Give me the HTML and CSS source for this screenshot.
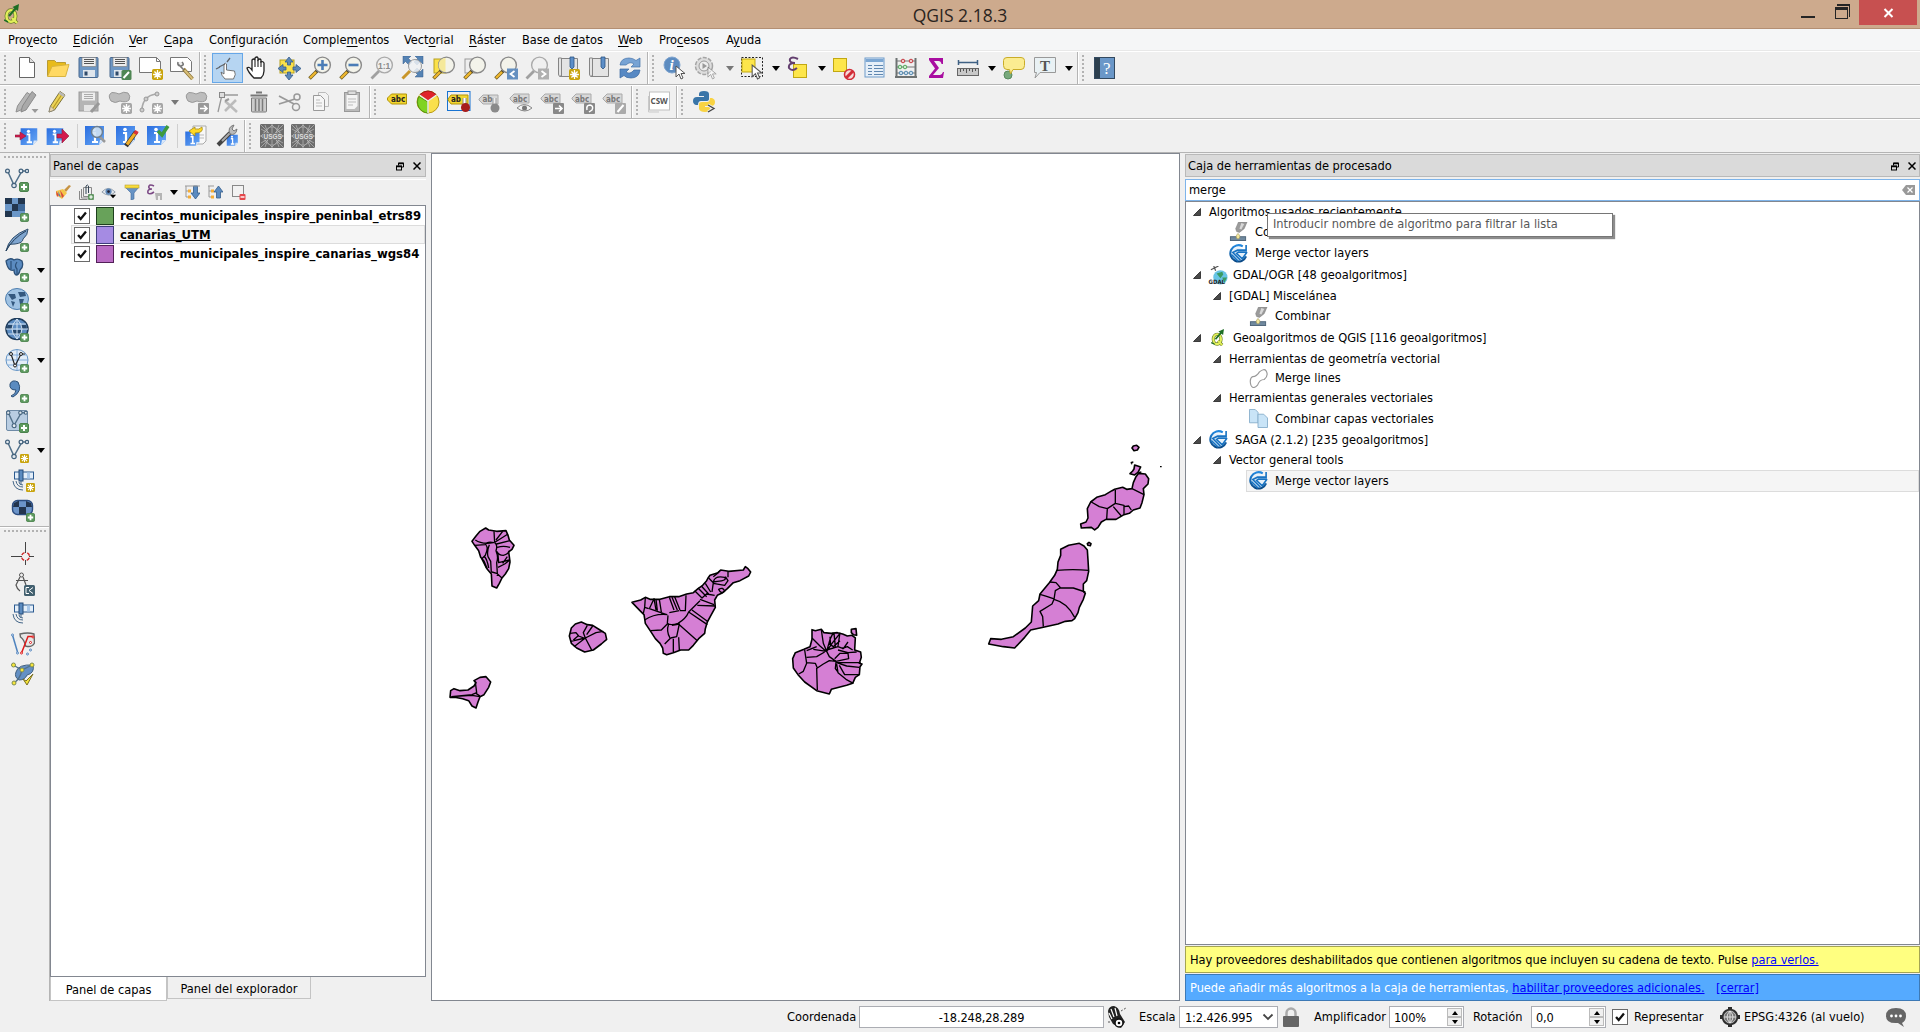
FILE: index.html
```html
<!DOCTYPE html>
<html lang="es">
<head>
<meta charset="utf-8">
<title>QGIS 2.18.3</title>
<link rel="stylesheet" href="styles.css">
</head>
<body>
<svg class="defs" width="0" height="0">
<defs>
<linearGradient id="gBlue" x1="0" y1="0" x2="1" y2="1"><stop offset="0" stop-color="#2a6ee0"/><stop offset="1" stop-color="#6aa9f5"/></linearGradient>
<linearGradient id="gSaga" x1="0" y1="0" x2="0" y2="1"><stop offset="0" stop-color="#2389df"/><stop offset="1" stop-color="#0b4a86"/></linearGradient>
</defs>
<symbol id="plus" viewBox="0 0 10 10"><rect x=".5" y=".5" width="9" height="9" rx="1.5" fill="#5d9a5f" stroke="#4b824d"/><path d="M5 2v6M2 5h6" stroke="#fff" stroke-width="2"/></symbol>
<symbol id="star" viewBox="0 0 10 10"><rect width="10" height="10" rx="1.5" fill="#c9a40d"/><path d="M5 1v8M1 5h8M2.2 2.2l5.6 5.6M7.8 2.2L2.2 7.8" stroke="#fff" stroke-width="1.2"/><circle cx="5" cy="5" r="1.6" fill="#fff"/></symbol>
<symbol id="gstar" viewBox="0 0 10 10"><rect width="10" height="10" rx="1.5" fill="#a6a6a6"/><path d="M5 1v8M1 5h8M2.2 2.2l5.6 5.6M7.8 2.2L2.2 7.8" stroke="#fff" stroke-width="1.2"/></symbol>
<symbol id="cursor" viewBox="0 0 12 15"><path d="M1 1v11l3-3 2 5 2-1-2-4.500h4z" fill="#fff" stroke="#555" stroke-width="1"/></symbol>
<symbol id="logo" viewBox="0 0 16 20"><ellipse cx="7" cy="12" rx="4.500" ry="5.800" fill="none" stroke="#65782a" stroke-width="3.800"/><path d="M8 14l5 5" stroke="#65782a" stroke-width="3.600"/><ellipse cx="7" cy="12" rx="4.500" ry="5.800" fill="none" stroke="#e2f05a" stroke-width="2.500"/><path d="M8 14l5 5" stroke="#e2f05a" stroke-width="2.400"/><path d="M5 12L12 4" stroke="#1d6e24" stroke-width="2"/><path d="M8.500 3L15 0l-1 7z" fill="#1d6e24"/><path d="M0 16l4 2" stroke="#1d6e24" stroke-width="1.500"/></symbol>
<symbol id="new" viewBox="0 0 24 24"><path d="M4.500 1.500h10l5 5v15h-15z" fill="#fff" stroke="#666"/><path d="M14.500 1.500v5h5" fill="#ddd" stroke="#666"/></symbol>
<symbol id="open" viewBox="0 0 24 24"><path d="M1.500 20V4.500h7l2 2h9V11" fill="#e8bb1b" stroke="#b99b33"/><path d="M1.500 20.500L6 10.500l17-2-3.500 12z" fill="#ffd964" stroke="#d8b440"/></symbol>
<symbol id="save" viewBox="0 0 24 24"><rect x="2" y="1.500" width="19" height="20" rx="1" fill="#6e97c4" stroke="#49698f"/><rect x="5" y="1.500" width="14" height="9" fill="#eee" stroke="#777" stroke-width=".6"/><path d="M7 3.500h10M7 5.500h10M7 7.500h10" stroke="#555" stroke-width="1"/><rect x="6" y="14" width="12" height="7" fill="#dfe5ec"/><rect x="7.500" y="15.500" width="3" height="4" fill="#304b6b"/></symbol>
<symbol id="saveas" viewBox="0 0 24 24"><use href="#save"/><rect x="13.500" y="14" width="10" height="10" rx="1.500" fill="#4e8653"/><path d="M15.500 22l5.500-6" stroke="#fff" stroke-width="2"/></symbol>
<symbol id="composer" viewBox="0 0 24 24"><path d="M.5 1.500h17l4 4v11H.5z" fill="#fff" stroke="#777"/><path d="M17.500 1.500v4h4" fill="none" stroke="#777"/><use href="#star" x="13" y="13" width="11" height="11"/></symbol>
<symbol id="manager" viewBox="0 0 24 24"><path d="M.5 1.500h17l4 4v10H.5z" fill="#fff" stroke="#777"/><path d="M13.500 13l9 10" stroke="#8e7230" stroke-width="3.500"/><path d="M14.500 14l8 9" stroke="#d7be78" stroke-width="2"/><path d="M8 8l6 6M12 6q3 3-1 4-4 0-3-4" stroke="#777" fill="#eee" stroke-width="1.600"/></symbol>
<symbol id="touch" viewBox="0 0 24 24"><path d="M8 23q-4-4-4-7l3 2V8q1.500-1.500 2.500 0v6l8 1q2 3-1 8z" transform="translate(2 0)" fill="#fff" stroke="#666" stroke-width=".9"/><path d="M4 11l6-3M12 6l3-4M1 13l4-2" stroke="#60656b" stroke-width="1.300"/></symbol>
<symbol id="hand" viewBox="0 0 24 24"><path d="M8 22q-6-6-7-10 2-2 5 2V4q2-2 3 0V2q2-2 3 0v2q2-2 3 0v2q2-1 3 1v8q0 4-3 7z" fill="#fff" stroke="#222" stroke-width="1.300"/><path d="M9 4v7M12 4v7M15 5v6" stroke="#222" stroke-width="1.100"/></symbol>
<symbol id="panselect" viewBox="0 0 24 24"><rect x="3" y="4" width="14" height="13" fill="#fbe14a" stroke="#b69f1f"/><path d="M12 1l4 5h-2.500v3h-3V6H8zM12 24l4-5h-2.500v-3h-3v3H8zM1 12.500l5-4V11h3v3H6v2.500zM24 12.500l-5-4V11h-3v3h3v2.500z" fill="#5d88b8" stroke="#355d8c" stroke-width=".8"/></symbol>
<symbol id="mag" viewBox="0 0 24 24"><path d="M9 15L1.500 22.500" stroke="#6b5a22" stroke-width="3.500"/><path d="M8 16L2 22" stroke="#f0b82e" stroke-width="2.300"/><path d="M10.500 13.500l-2 2" stroke="#333" stroke-width="3"/><circle cx="14.500" cy="9" r="7.900" fill="#f3f3ea" stroke="#8a8a8a" stroke-width="1.400"/></symbol>
<symbol id="gmag" viewBox="0 0 24 24"><path d="M9 15L1.500 22.500" stroke="#a0a0a0" stroke-width="2.800"/><circle cx="14.500" cy="9" r="7.900" fill="#f0f0f0" stroke="#aaa" stroke-width="1.400"/></symbol>
<symbol id="zin" viewBox="0 0 24 24"><use href="#mag"/><path d="M14.500 4v10M9.500 9h10" stroke="#4b7db6" stroke-width="2.600"/></symbol>
<symbol id="zout" viewBox="0 0 24 24"><use href="#mag"/><path d="M9.500 9h10" stroke="#4b7db6" stroke-width="2.600"/></symbol>
<symbol id="zfull" viewBox="0 0 24 24"><path d="M2 0h8L7.500 2.500 11 6 8 9 4.500 5.500 2 8zM22 0v8l-2.500-2.500L16 9l-3-3 3.500-3.500L14 0zM22 21h-8l2.500-2.500L13 15l3-3 3.500 3.500L22 13z" fill="#5583b4" stroke="#355d8c" stroke-width=".5"/><path d="M9 15L1.500 22.500" stroke="#c9962a" stroke-width="3"/><circle cx="14" cy="10" r="6.500" fill="#eef1f3" fill-opacity=".85" stroke="#999"/></symbol>
<symbol id="zsel" viewBox="0 0 24 24"><rect x="2" y="3" width="12" height="14" fill="#fbe14a" stroke="#b69f1f"/><use href="#mag"/><path d="M13.500 2a7 7 0 0 0 0 14z" fill="#f5e99a"/></symbol>
<symbol id="zlayer" viewBox="0 0 24 24"><rect x="2" y="3" width="12" height="14" fill="#eee" stroke="#999"/><use href="#mag"/></symbol>
<symbol id="zlast" viewBox="0 0 24 24"><use href="#mag"/><rect x="13" y="12.500" width="11" height="11" fill="#6590c0"/><path d="M20.500 15l-4 3 4 3" fill="none" stroke="#fff" stroke-width="1.800"/></symbol>
<symbol id="znext" viewBox="0 0 24 24"><use href="#gmag"/><rect x="13" y="12.500" width="11" height="11" fill="#b0b0b0"/><path d="M16.500 15l4 3-4 3" fill="none" stroke="#fff" stroke-width="1.800"/></symbol>
<symbol id="book" viewBox="0 0 24 24"><path d="M2.500 2h3v18h-2q-1 0-1-2zM5.500 2.500h16v18h-18" fill="#e4e4e4" stroke="#858585"/><path d="M14 1h4v10l-2 2-2-2z" fill="#5d8fc8" stroke="#2b5483" stroke-width=".8"/></symbol>
<symbol id="newbook" viewBox="0 0 24 24"><use href="#book"/><use href="#star" x="13" y="13" width="11" height="11"/></symbol>
<symbol id="refresh" viewBox="0 0 24 24"><path d="M2 9q1-7 9-7 4 0 7 2.500L22 2v9h-9l3-3q-4-3-8 1z" fill="#77a3d4" stroke="#4373aa" stroke-width=".7"/><path d="M22 14q-1 8-9 8-5 0-7-2.500L2 22v-9h9l-3 3q4 3 8-2z" fill="#5789c4" stroke="#3a69a0" stroke-width=".7"/></symbol>
<symbol id="disc" viewBox="0 0 24 24"><circle cx="9" cy="9" r="8" fill="#5d8cc0" stroke="#7fa4cf"/></symbol>
<symbol id="action" viewBox="0 0 24 24"><circle cx="10" cy="10" r="8.500" fill="#ddd" stroke="#a5a5a5" stroke-width="1.500" stroke-dasharray="4 1.500"/><circle cx="10" cy="10" r="5" fill="#eee" stroke="#999"/><path d="M8.500 7v6l4.500-3z" fill="#999"/><g opacity=".5"><use href="#cursor" x="13" y="10" width="11" height="14"/></g></symbol>
<symbol id="select" viewBox="0 0 24 24"><rect x="1.500" y="1.500" width="21" height="19" fill="none" stroke="#222" stroke-dasharray="2 1.500"/><rect x="2" y="3" width="13" height="13" fill="#fde64b" stroke="#c2a812"/><use href="#cursor" x="11" y="8" width="13" height="16"/></symbol>
<symbol id="expr" viewBox="0 0 24 24"><rect x="7.500" y="8.500" width="13" height="13" fill="#fde64b" stroke="#c2a812"/><path d="M12 3Q6 0 4 3q-1 4 5 4-7 0-6 5 3 4 8 0" fill="none" stroke="#623e6e" stroke-width="2"/></symbol>
<symbol id="deselect" viewBox="0 0 24 24"><rect x="1.500" y="2.500" width="13" height="13" fill="#fde64b" stroke="#c2a812"/><circle cx="17.500" cy="18.500" r="5" fill="#f7dada" stroke="#d22d38" stroke-width="1.600"/><path d="M14 22l7-7" stroke="#d22d38" stroke-width="3"/></symbol>
<symbol id="table" viewBox="0 0 24 24"><rect x="2" y="2" width="19" height="19" fill="#e6eff8" stroke="#6e9bca"/><path d="M2.500 4.500h18" stroke="#7ca7d3" stroke-width="3"/><path d="M5 9.500h4M11 9.500h9M5 12.500h4M11 12.500h9M5 15.500h4M11 15.500h9M5 18.500h4M11 18.500h9" stroke="#5f87b0" stroke-width="1.200"/></symbol>
<symbol id="abacus" viewBox="0 0 24 24"><path d="M2.500 2v20M21.500 2v20M1 21h22" stroke="#6d7272" stroke-width="2" fill="none"/><path d="M3 5h18M3 11h18M3 17h18" stroke="#777"/><g fill="#eccaca" stroke="#c63b42"><circle cx="9" cy="5" r="1.800"/><circle cx="17" cy="5" r="1.800"/></g><g fill="#cfe9cf" stroke="#55a75d"><circle cx="6" cy="11" r="1.800"/><circle cx="11" cy="11" r="1.800"/></g><g fill="#c6dcec" stroke="#5489b0"><circle cx="7" cy="17" r="1.800"/><circle cx="12" cy="17" r="1.800"/><circle cx="17" cy="17" r="1.800"/></g></symbol>
<symbol id="sigma" viewBox="0 0 24 24"><path d="M4 2h14v6h-1.500q-.5-3-3-3H9l5 7-6 7h7q2 0 3-3h1l-1 6H4v-2l6-7.500L4 4z" fill="#a80da0"/></symbol>
<symbol id="measure" viewBox="0 0 24 24"><path d="M2 6.500h20M2.500 4v5M21.500 4v5" stroke="#3f6184" stroke-width="1.500"/><rect x="1.500" y="12.500" width="21" height="7" fill="#c8c8c8" stroke="#666"/><path d="M4.500 13v3M7.500 13v2M10.500 13v4M13.500 13v2M16.500 13v3M19.500 13v2" stroke="#555"/></symbol>
<symbol id="tips" viewBox="0 0 24 24"><circle cx="6" cy="19" r="4" fill="#78a97c" stroke="#588a5e"/><path d="M5 1.500h14q3.500 0 3.500 3v5q0 4-3.500 4h-8L8.500 18l-1-4.500H5q-3.500 0-3.500-4v-5q0-3 3.500-3z" fill="#fbec91" stroke="#c9ac28"/></symbol>
<symbol id="textann" viewBox="0 0 24 24"><path d="M1.500 1.500h21v15H7L2 22l1.500-5.500h-2z" fill="#e9f1f4" stroke="#999"/></symbol>
<symbol id="help" viewBox="0 0 24 24"><rect x="1.500" y="1.500" width="20" height="21" fill="#6a97c8" stroke="#33495f"/><path d="M4.500 2v20" stroke="#2c3f4e" stroke-width="5"/></symbol>
<symbol id="pencil" viewBox="0 0 24 24"><path d="M3 22l1.500-6L14 1.500 19 5 8.500 20z" fill="#ecd358" stroke="#7a713d"/><path d="M7 18L16.500 3.500" stroke="#b79924" stroke-width="1.200"/><path d="M14 1.500L19 5l-1.500 2-5-3.500z" fill="#b9b9b9"/><path d="M3 22l1.500-6L8.500 20z" fill="#e9d5ac" stroke="#777" stroke-width=".6"/></symbol>
<symbol id="pencils" viewBox="0 0 24 24"><path d="M1 22l1.500-6L12 2.500 16 5 6 20z" fill="#b6b6b6" stroke="#909090"/><path d="M6 22l1.500-6L17 1.500 21 5 11 20z" fill="#a9a9a9" stroke="#8a8a8a"/><path d="M16.500 19h7l-3.500 4z" fill="#999"/></symbol>
<symbol id="gsave" viewBox="0 0 24 24"><rect x="2" y="2" width="19" height="19" fill="#b5b5b5" stroke="#9a9a9a"/><rect x="5" y="2.500" width="13" height="8" fill="#eee"/><path d="M7 4.500h9M7 6.500h9M7 8.500h9" stroke="#aaa"/><rect x="7" y="15" width="10" height="6" fill="#e5e5e5"/><path d="M14 22l8-9" stroke="#999" stroke-width="3"/></symbol>
<symbol id="gblob" viewBox="0 0 24 24"><path d="M4 2.500q4 0 7 1.500 5-3 9-1 3 3 1 7-3 3-9 1Q7 14 3 11-1 5 4 2.500z" fill="#bdbdbd" stroke="#999"/></symbol>
<symbol id="addfeat" viewBox="0 0 24 24"><use href="#gblob"/><use href="#gstar" x="13" y="13" width="11" height="11"/></symbol>
<symbol id="movefeat" viewBox="0 0 24 24"><use href="#gblob"/><rect x="13" y="13" width="11" height="11" rx="1" fill="#999"/><path d="M15 18.500h7M19 15.500l3 3-3 3" stroke="#fff" stroke-width="1.600" fill="none"/></symbol>
<symbol id="curve" viewBox="0 0 24 24"><path d="M3 19Q4 6 17 4" fill="none" stroke="#aaa" stroke-width="1.600"/><g fill="#ccc" stroke="#999"><circle cx="3" cy="20" r="2"/><circle cx="7" cy="9" r="2"/><circle cx="18" cy="4" r="2"/></g><use href="#gstar" x="13" y="13" width="11" height="11"/></symbol>
<symbol id="nodes" viewBox="0 0 24 24"><path d="M2 22L6 5h16" fill="none" stroke="#999" stroke-width="1.300"/><rect x="3.500" y="2.500" width="5" height="5" fill="#ddd" stroke="#888"/><path d="M9 11l12 11M20 10L9 21" stroke="#bbb" stroke-width="2.600"/><path d="M9 11l4-2" stroke="#999" stroke-width="2"/></symbol>
<symbol id="trash" viewBox="0 0 24 24"><path d="M4.500 8h15v13q0 1-1 1h-13q-1 0-1-1z" fill="#ccc" stroke="#7b7b7b"/><path d="M8.500 9v12M12 9v12M15.500 9v12" stroke="#7b7b7b" stroke-width="1.500"/><path d="M3.500 5.500h17M9 2.500h6" stroke="#777" stroke-width="2.200"/></symbol>
<symbol id="cut" viewBox="0 0 24 24"><path d="M1 6l15 8M1 14L17 9" stroke="#999" stroke-width="1.800"/><circle cx="19" cy="7" r="3" fill="none" stroke="#999" stroke-width="1.500"/><circle cx="18" cy="17" r="3.500" fill="none" stroke="#999" stroke-width="1.500"/></symbol>
<symbol id="copy" viewBox="0 0 24 24"><path d="M9.500 2.500h7l3 3v11h-10z" fill="#f3f3f3" stroke="#bbb"/><path d="M4.500 5.500h7l4 4v11h-11z" fill="#f6f6f6" stroke="#999"/><path d="M7 10h4M7 13h6M7 16h6" stroke="#bbb"/></symbol>
<symbol id="paste" viewBox="0 0 24 24"><rect x="4.500" y="2.500" width="15" height="19" fill="#bbb" stroke="#999"/><path d="M6.500 5h11v11l-3 3h-8z" fill="#f4f4f4"/><path d="M8 9h8M8 12h8M8 15h5" stroke="#bbb"/><rect x="8" y="1" width="8" height="3.500" fill="#ddd" stroke="#999"/></symbol>
<symbol id="tag" viewBox="0 0 24 24"><path d="M2.500 8l4-4h15v10h-15l-4-4z" fill="#f2d62e" stroke="#b2940a"/></symbol>
<symbol id="gtag" viewBox="0 0 24 24"><path d="M1 8l4-4h15v9H5L1 9z" fill="#d8d8d8" stroke="#aaa"/></symbol>
<symbol id="pie" viewBox="0 0 24 24"><circle cx="12" cy="12" r="11" fill="#fae04b" stroke="#b99a13"/><path d="M12 12L3 6.500A11 11 0 0 0 12 23z" fill="#7fd321" stroke="#4d9214"/><path d="M12 11L4 4.500Q12-2.500 20 4.500z" fill="#e0232a" stroke="#a3161b"/><path d="M12 11v12M12 11L3.500 5M12 11l8.500-6" stroke="#eee" stroke-width="1.500"/></symbol>
<symbol id="pinned" viewBox="0 0 24 24"><rect x=".5" y="1.500" width="22.500" height="19" fill="none" stroke="#1873d2"/><path d="M1 9l3-4h17v9H4L1 10z" fill="#f2d62e" stroke="#b2940a"/><path d="M16 8v7h3V8" fill="#fff" stroke="#888"/><circle cx="18.500" cy="17.500" r="4.500" fill="#a71c1c"/></symbol>
<symbol id="gpin" viewBox="0 0 24 24"><path d="M1 9l4-4h15v9H5L1 10z" fill="#d8d8d8" stroke="#aaa"/><path d="M15 8v8h3V8" fill="#eee" stroke="#999"/><circle cx="17" cy="18" r="4.500" fill="#8a8a8a"/></symbol>
<symbol id="geye" viewBox="0 0 24 24"><use href="#gtag"/><path d="M8 18q7-7 15 0-7 6-15 0z" fill="#f4f4f4" stroke="#888"/><circle cx="15.500" cy="18" r="2.500" fill="#777"/></symbol>
<symbol id="gmove" viewBox="0 0 24 24"><use href="#gtag"/><rect x="13" y="13" width="11" height="11" rx="1" fill="#888"/><path d="M15 18.500h7M19 15.500l3 3-3 3" stroke="#fff" stroke-width="1.600" fill="none"/></symbol>
<symbol id="grot" viewBox="0 0 24 24"><use href="#gtag"/><rect x="13" y="13" width="11" height="11" rx="1" fill="#888"/><path d="M16 20q-1-5 3-5 4 1 2 5l-3 2" stroke="#fff" stroke-width="1.500" fill="none"/></symbol>
<symbol id="gedit" viewBox="0 0 24 24"><use href="#gtag"/><rect x="13" y="13" width="11" height="11" rx="1" fill="#aaa"/><path d="M15.500 22l6-7" stroke="#fff" stroke-width="2"/></symbol>
<symbol id="csw" viewBox="0 0 24 24"><path d="M1.500 6v16H12" fill="none" stroke="#c9c9c9"/><rect x="2.500" y="2" width="20" height="18" fill="#fff" stroke="#c0c0c0"/></symbol>
<symbol id="python" viewBox="0 0 24 24"><path d="M7 4q0-3 5-3t5 3v5q0 2-3 2H9q-3 0-3 4H4q-3-1-3-4 0-4 4-4h7V6H7z" fill="#3a75a8"/><path d="M18 8h2q3 1 3 4 0 4-4 4h-6v1h5v2q0 3-5 3t-6-3v-5q0-2 3-2h5q3 0 3-4z" fill="#f9d342"/><path d="M16 15l6 3.500-6 3.500" fill="none" stroke="#eee" stroke-width="3"/><path d="M16 15l6 3.500-6 3.500" fill="none" stroke="#444" stroke-width="1.300"/></symbol>
<symbol id="pg" viewBox="0 0 24 24"><path d="M3 2h19v14l-5 5H3z" fill="url(#gBlue)"/><path d="M17 21l1-5h4z" fill="#d8e6f8"/><path d="M10 9h3v9M10 18h6" stroke="#fff" stroke-width="2.200" fill="none"/><circle cx="12" cy="5.500" r="1.800" fill="#fff"/></symbol>
<symbol id="imp" viewBox="0 0 24 24"><use href="#pg" x="3" y="2" width="21" height="22"/><path d="M0 11h5V8l6 4-6 4v-3H0z" fill="#d3194e" stroke="#8f1c3a" stroke-width=".6"/></symbol>
<symbol id="exp" viewBox="0 0 24 24"><use href="#pg" x="-2" y="2" width="21" height="22"/><path d="M11 10h5V5l7 7-7 7v-5h-5z" fill="#d3194e" stroke="#8f1c3a" stroke-width=".6"/></symbol>
<symbol id="inspect" viewBox="0 0 24 24"><use href="#pg" x="-2"/><path d="M15 12l6 6" stroke="#999" stroke-width="2.500"/><circle cx="13" cy="8" r="5.500" fill="#cfe1f2" fill-opacity=".9" stroke="#6b7f93" stroke-width="1.500"/></symbol>
<symbol id="pedit" viewBox="0 0 24 24"><use href="#pg" x="-2"/><path d="M11 22L21 8" stroke="#333" stroke-width="4.500"/><path d="M12 20.500L20 9.500" stroke="#f0ad28" stroke-width="3"/><path d="M20 10l2-3" stroke="#d9323a" stroke-width="4"/></symbol>
<symbol id="pcheck" viewBox="0 0 24 24"><use href="#pg" x="-2"/><path d="M12 7l4 4 6-9" fill="none" stroke="#3d9a3c" stroke-width="3.500"/></symbol>
<symbol id="pback" viewBox="0 0 24 24"><path d="M9 2h13v15l-3 3H9z" fill="#f8f8f8" stroke="#aaa"/><path d="M11 11h9M11 14h9" stroke="#bbb"/><use href="#pg" x="-1" y="6" width="18" height="18"/><path d="M17 1q2 6-7 6v3L4 5l6-4v2q4 1 7-2z" transform="translate(1 2)" fill="#ffd823" stroke="#a58b17" stroke-width=".8"/></symbol>
<symbol id="pwrench" viewBox="0 0 24 24"><use href="#pg" x="10" y="9" width="14" height="15"/><path d="M3 21L15 9" stroke="#444" stroke-width="4"/><path d="M7 17L16 8" stroke="#aaa" stroke-width="2"/><path d="M22 5q-1 7-7 5-3-7 4-9l-2 4 2 2z" fill="#bbb" stroke="#777"/></symbol>
<symbol id="usgs" viewBox="0 0 24 24"><rect width="24" height="24" fill="#6c6c6c"/><path d="M0 0l24 24M24 0L0 24M12 0v24M0 12h24M12 1l11 11-11 11L1 12zM5 1l3 8-7-4M19 1l-3 8 7-4M5 23l3-8-7 4M19 23l-3-8 7 4" fill="none" stroke="#bcbcbc" stroke-width=".7"/><circle cx="12" cy="12" r="9" fill="none" stroke="#a8a8a8" stroke-width=".7"/><rect x="3" y="9" width="18" height="7" fill="#7b7b7b"/></symbol>
<symbol id="vec" viewBox="0 0 24 24"><path d="M3 4l6 13L17 3h4" fill="none" stroke="#51708a" stroke-width="1.500"/><g fill="#e3eaf0" stroke="#42617c" stroke-width="1.200"><circle cx="2.500" cy="3" r="1.900"/><circle cx="9" cy="17.500" r="2.200"/><circle cx="16" cy="3" r="1.900"/><circle cx="22" cy="3" r="1.700"/></g></symbol>
<symbol id="vplus" viewBox="0 0 24 24"><use href="#vec"/><use href="#plus" x="14" y="14" width="10" height="10"/></symbol>
<symbol id="vstar" viewBox="0 0 24 24"><use href="#vec"/><use href="#star" x="15" y="15" width="9" height="9"/></symbol>
<symbol id="raster" viewBox="0 0 24 24"><rect y="0" width="20" height="19" fill="#6b97c8"/><path d="M0 0h7v6H0zM13 0h7v6h-7zM7 6h6v7H7zM0 13h7v6H0z" fill="#22364e"/><path d="M13 6h7v7h-7z" fill="#3e6898"/><use href="#plus" x="15" y="15" width="9" height="9"/></symbol>
<symbol id="feather" viewBox="0 0 24 24"><path d="M1 23Q4 8 23 1q0 6-5 10 0 4-8 5-5 0-6 1z" fill="#7fa5cf" stroke="#33506e"/><path d="M1 23Q8 10 21 3" fill="none" stroke="#223d58"/><use href="#plus" x="15" y="15" width="9" height="9"/></symbol>
<symbol id="pgis" viewBox="0 0 24 24"><path d="M1 3q4-4 8-1 4-2 8 1 2 6-2 9-1 5-4 5-2-1-2-5-6 2-8-9z" fill="#5b8bc0" stroke="#2c5078" stroke-width="1.300"/><path d="M6 3v8M12 4q-3 4 0 7v6" fill="none" stroke="#2c5078" stroke-width="1.200"/><use href="#plus" x="15" y="15" width="9" height="9"/></symbol>
<symbol id="spatial" viewBox="0 0 24 24"><ellipse cx="12" cy="11" rx="11.500" ry="10.500" fill="#9fc2e3" stroke="#4e7eae"/><path d="M3 6h7l1 4-4 2zM13 4h7l1 4-6 1zM6 13l4 1-2 5zM14 11h5l-2 6-2-1z" fill="#34587f"/><use href="#plus" x="15" y="15" width="9" height="9"/></symbol>
<symbol id="wms" viewBox="0 0 24 24"><ellipse cx="12" cy="11" rx="11" ry="10.500" fill="#5b8bc0" stroke="#1f3c5b" stroke-width="1.500"/><path d="M3 7h5v4H1zM16 7h5l1 4h-6zM8 12h8v4H8z" fill="#27486c"/><path d="M1 11h22M3 6h18M3 16h18M12 1v20M12 1Q2 11 12 21M12 1q10 10 0 20" fill="none" stroke="#cfe0f2"/><use href="#plus" x="15" y="15" width="9" height="9"/></symbol>
<symbol id="wfs" viewBox="0 0 24 24"><ellipse cx="12" cy="11" rx="11" ry="10.500" fill="#e3edf7" stroke="#6796c6"/><path d="M1 11h22M3 6h18M3 16h18M12 1v20" fill="none" stroke="#6da0d6" stroke-width=".8"/><path d="M6 5l4 12 6-12h4" fill="none" stroke="#222" stroke-width="1.200"/><g fill="#eee" stroke="#222"><circle cx="6" cy="5" r="1.500"/><circle cx="10" cy="16.500" r="1.500"/><circle cx="16" cy="5" r="1.500"/></g><use href="#plus" x="15" y="15" width="9" height="9"/></symbol>
<symbol id="comma" viewBox="0 0 24 24"><path d="M6 17q5-2 5-6-7 0-6-6 2-5 8-2 5 9-5 15z" fill="#5b8bc0" stroke="#2c5078"/><use href="#plus" x="15" y="15" width="9" height="9"/></symbol>
<symbol id="vbox" viewBox="0 0 24 24"><rect x="1.500" y="1.500" width="21" height="20" rx="1.500" fill="#b9cde2" stroke="#6e8aa6"/><g transform="translate(1 1) scale(.9)"><use href="#vec"/></g><use href="#plus" x="14" y="14" width="10" height="10"/></symbol>
<symbol id="gps" viewBox="0 0 24 24"><rect x="3.500" y="3" width="19" height="7" fill="#e3eef9" stroke="#2b5a90"/><path d="M16 3.500h3v6h-3z" fill="#a9c8ea"/><rect x="8" y="1" width="4" height="11" fill="#5b8bc0" stroke="#254b78"/><path d="M10 12v3M2 12q1 9 10 9M5 12q1 6 7 6M8 13q0 3 4 3" fill="none" stroke="#456789" stroke-width="1"/></symbol>
<symbol id="gpsstar" viewBox="0 0 24 24"><use href="#gps"/><use href="#star" x="15" y="14" width="9" height="9"/></symbol>
<symbol id="virt" viewBox="0 0 24 24"><rect x="1.500" y="1.500" width="20" height="14" rx="5" fill="#6b93c8" stroke="#2c4d80" stroke-width="1.400"/><path d="M3 4l4-2h1v6H2zM15 2l5 2 1 4h-6zM8 8h7v7H8z" fill="#22344e"/><use href="#plus" x="15" y="14" width="9" height="9"/></symbol>
<symbol id="cross" viewBox="0 0 24 24"><path d="M14.500 0v11M14.500 18v5M0 14.500h11M18 14.500h5" stroke="#444" stroke-width="1"/><circle cx="14.500" cy="14.500" r="4" fill="none" stroke="#d02a2a" stroke-width="1.400" stroke-dasharray="3.500 2.800" stroke-dashoffset="-1.300"/></symbol>
<symbol id="compass" viewBox="0 0 24 24"><circle cx="10.500" cy="3" r="2" fill="none" stroke="#555"/><path d="M9 5L5 13q1 4 4 6M12 5l3 8M5 8.500h12" fill="none" stroke="#555" stroke-width="1.200"/><rect x="13" y="13" width="11" height="11" rx="1.500" fill="#42606f"/><path d="M18 15.500h-3v6h3M22 15.500l-4 3 4 3" stroke="#fff" fill="none"/></symbol>
<symbol id="topo" viewBox="0 0 24 24"><path d="M1.500 3l5 17" stroke="#4d82be" stroke-width="1.500"/><circle cx="1.500" cy="3" r="1" fill="#fff" stroke="#4d82be"/><circle cx="6.500" cy="21" r="1" fill="#fff" stroke="#4d82be"/><path d="M9 2q8-2 14 0l.5 9q-3 5-9 3-1-6-5-9z" fill="#e6e6e6" stroke="#666" stroke-width="1.400"/><path d="M10.500 21L17 4.500h5" fill="none" stroke="#e01b1b" stroke-width="1.500"/><g fill="#fff" stroke="#e01b1b"><circle cx="10.500" cy="21" r="1"/><circle cx="22" cy="5" r="1"/><circle cx="19.500" cy="10.500" r="1"/></g><g fill="#fff" stroke="#4d82be"><circle cx="19.500" cy="18" r="1"/><circle cx="16.500" cy="22" r="1"/></g></symbol>
<symbol id="geom" viewBox="0 0 24 24"><path d="M5 10q2-8 17-7 2 8-6 10-2 5-8 5-5-3-3-8z" fill="#6490c4" stroke="#41607f"/><path d="M2 3l9 5L21 3M11 8q-2 9-8 13" fill="none" stroke="#51708a" stroke-width="1.300"/><g fill="#f8e63a" stroke="#7d8c52"><circle cx="2.500" cy="3" r="2"/><circle cx="21" cy="3" r="2"/><circle cx="11" cy="8" r="2"/><circle cx="3" cy="21" r="2"/></g><path d="M12 17l3 2 7-7-6 11z" fill="#f8e63a" stroke="#7a6f20"/></symbol>
<symbol id="float" viewBox="0 0 8 8"><path d="M2.500 3V.5h5v4H5" fill="none" stroke="#000"/><path d="M2 1h6" stroke="#000" stroke-width="1.500"/><rect x=".5" y="3.500" width="5" height="4" fill="none" stroke="#000"/><path d="M0 4h6" stroke="#000" stroke-width="1.500"/></symbol>
<symbol id="x" viewBox="0 0 8 8"><path d="M.5 .5l7 7M7.500 .5l-7 7" stroke="#000" stroke-width="1.500"/></symbol>
<symbol id="brush" viewBox="0 0 16 16"><path d="M9 6l5-5 2 1-5 6z" fill="#c79343"/><path d="M1 7l7-2 4 4-5 6-6-4z" fill="#f4c64a"/><path d="M1 7l3 4-2 2zM5 6l4 6-2 2z" fill="#d9473f"/><path d="M3 7l3 6-2-1z" fill="#4a7fc0"/></symbol>
<symbol id="grp" viewBox="0 0 16 16"><path d="M5.500 3.500h8v9h-8zM3.500 5v9h8M1.500 7v8.500h8" fill="#eee" stroke="#888"/><path d="M8 10V2q1.500-2 2.500 0v7" fill="none" stroke="#345"/><use href="#plus" x="10" y="10" width="6" height="6"/></symbol>
<symbol id="eye" viewBox="0 0 18 16"><path d="M1 8q7-8 15 0-7 7-15 0z" fill="#e3e8ee" stroke="#8a97a5"/><circle cx="8.500" cy="7.500" r="3.500" fill="#5b85b5"/><circle cx="8.500" cy="7.500" r="1.500" fill="#223"/><path d="M10 11h7l-3.500 4z" fill="#000"/></symbol>
<symbol id="funnel" viewBox="0 0 16 16"><path d="M1 3h14l-5 6v6l-3 1V9z" fill="#6793c5" stroke="#41699a" stroke-width=".6"/><rect x="1" y="1" width="14" height="3" fill="#f8dc3c" stroke="#b8a030" stroke-width=".6"/></symbol>
<symbol id="ef" viewBox="0 0 16 16"><path d="M7 2Q3 0 2 2q-1 3 3 3-5 0-4 4 2 2 6-1" fill="none" stroke="#7c4a86" stroke-width="1.600"/><path d="M8 9h7v7h-2v-4h-2v4H9z" fill="#b5b5b5"/></symbol>
<symbol id="down" viewBox="0 0 16 16"><path d="M1 2h5M2 2v11h3M2 7h3" fill="none" stroke="#999"/><path d="M4 5.500h3v3H4zM4 11.500h3v3H4z" fill="#f6ad35"/><path d="M9.500 2h4v7H16l-4.500 6L7 9h2.500z" fill="#5b8bc0" stroke="#345d8c" stroke-width=".8"/><path d="M6 2h10" stroke="#999"/></symbol>
<symbol id="up" viewBox="0 0 16 16"><path d="M1 2h6M2 2v11h3M2 7h3" fill="none" stroke="#999"/><path d="M4 5.500h3v3H4zM4 11.500h3v3H4z" fill="#f6ad35"/><path d="M9.500 14h4V8H16l-4.500-6L7 8h2.500z" fill="#5b8bc0" stroke="#345d8c" stroke-width=".8"/></symbol>
<symbol id="rem" viewBox="0 0 16 16"><rect x="2.500" y="1.500" width="11" height="11" fill="#f2f2f2" stroke="#888"/><rect x="9.500" y="10" width="6" height="6" rx="1" fill="#e4474b"/><path d="M10.500 13h4" stroke="#fff" stroke-width="1.400"/></symbol>
<symbol id="tri" viewBox="0 0 8 8"><path d="M7.500 .5v7h-7z" fill="#4a4a4a" stroke="#222" stroke-width=".8"/></symbol>
<symbol id="alg" viewBox="0 0 20 20"><path d="M7 7l3-7h9l-3 7-5 4-3-1z" fill="#9b9b9b" stroke="#777" stroke-width=".5"/><path d="M13 1l3 1-3 6-2-1z" fill="#d8d8d8"/><rect x="1.500" y="15.500" width="16" height="4" fill="#70899e" stroke="#4d6478"/><path d="M9.500 12q4 4 0 6-4-2 0-6z" fill="#f3e69b" stroke="#998f50" stroke-width=".6"/></symbol>
<symbol id="saga" viewBox="0 0 20 20"><circle cx="9.500" cy="10.500" r="7" fill="#e4f0fa"/><path d="M14.500 2.500A8.600 8.600 0 1 0 18 13" fill="none" stroke="url(#gSaga)" stroke-width="2.200"/><path d="M18 1v5.500H9L4 9l8 8M2.500 11l7 7M19 8.500h-9l-2 1.500 6 5.500 5-7" fill="none" stroke="#1873c2" stroke-width="1.700"/></symbol>
<symbol id="gdal" viewBox="0 0 20 20"><circle cx="12" cy="12" r="7.500" fill="#68c4e6"/><path d="M8 8l6-2 1 3-3 4zM14 12l5 0-3 6z" fill="#3a9b62"/><path d="M2 4l8-4M5 0l2 5" stroke="#555" stroke-width="1.300"/></symbol>
<symbol id="blob" viewBox="0 0 20 20"><path d="M4 8q4 0 7-5 5-4 7-1 3 5-2 9-5 0-7 6-5 5-7 0-2-7 2-9z" fill="#fff" stroke="#999" stroke-width="1.200"/></symbol>
<symbol id="docs" viewBox="0 0 20 20"><path d="M.5 .5h6l3 3v11h-9z" fill="#c9e4f7" stroke="#8bb1cd"/><path d="M9.500 5.500h6l4 4v10h-10z" fill="#c9e4f7" stroke="#8bb1cd"/></symbol>
</svg>

<header class="titlebar">
  <svg class="app-logo"><use href="#logo"/></svg>
  <h1>QGIS 2.18.3</h1>
  <div class="winbtns"><span class="min"></span><svg class="restore" viewBox="0 0 15 15"><path d="M2 0h13v13h-1V2H2z" fill="#252525"/><path d="M0 3h13v12H0zM1 6v8h11V6z" fill="#252525" fill-rule="evenodd"/></svg><span class="close"><svg viewBox="0 0 8 8"><path d="M0 0l8 8M8 0L0 8" stroke="#fff" stroke-width="2"/></svg></span></div>
</header>
<nav class="menu"><span>Pro<u>y</u>ecto</span><span><u>E</u>dición</span><span><u>V</u>er</span><span><u>C</u>apa</span><span>Con<u>f</u>iguración</span><span>Comple<u>m</u>entos</span><span>Vect<u>o</u>rial</span><span><u>R</u>áster</span><span>Base de <u>d</u>atos</span><span><u>W</u>eb</span><span>Pro<u>c</u>esos</span><span>A<u>y</u>uda</span></nav>

<div class="toolrow">
  <div class="bar"><i class="grip"></i><b><svg><use href="#new"/></svg></b><b><svg><use href="#open"/></svg></b><b><svg><use href="#save"/></svg></b><b><svg><use href="#saveas"/></svg></b><b><svg><use href="#composer"/></svg></b><b><svg><use href="#manager"/></svg></b></div>
  <div class="bar"><i class="grip"></i><b class="on"><svg><use href="#touch"/></svg></b><b><svg><use href="#hand"/></svg></b><b><svg><use href="#panselect"/></svg></b><b><svg><use href="#zin"/></svg></b><b><svg><use href="#zout"/></svg></b><b><svg><use href="#gmag"/><text x="8" y="12.500" class="t11">1:1</text></svg></b><b><svg><use href="#zfull"/></svg></b><b><svg><use href="#zsel"/></svg></b><b><svg><use href="#zlayer"/></svg></b><b><svg><use href="#zlast"/></svg></b><b><svg><use href="#znext"/></svg></b><b><svg><use href="#newbook"/></svg></b><b><svg><use href="#book"/></svg></b><b><svg><use href="#refresh"/></svg></b></div>
  <div class="bar"><i class="grip"></i><b><svg><use href="#disc"/><text x="6.500" y="14" class="ti">i</text><use href="#cursor" x="12" y="9" width="12" height="15"/></svg></b><b><svg><use href="#action"/></svg></b><em class="gray"></em><b><svg><use href="#select"/></svg></b><em></em><b><svg><use href="#expr"/></svg></b><em></em><b><svg><use href="#deselect"/></svg></b><b><svg><use href="#table"/></svg></b><b><svg><use href="#abacus"/></svg></b><b><svg><use href="#sigma"/></svg></b><b><svg><use href="#measure"/></svg></b><em></em><b><svg><use href="#tips"/></svg></b><b><svg><use href="#textann"/><text x="7" y="14.500" class="ts">T</text></svg></b><em></em></div>
  <div class="bar last"><i class="grip"></i><b><svg><use href="#help"/><text x="10" y="17.500" class="tq">?</text></svg></b></div>
</div>
<div class="toolrow">
  <div class="bar"><i class="grip"></i><b><svg><use href="#pencils"/></svg></b><b><svg><use href="#pencil"/></svg></b><b><svg><use href="#gsave"/></svg></b><b><svg><use href="#addfeat"/></svg></b><b><svg><use href="#curve"/></svg></b><em class="gray"></em><b><svg><use href="#movefeat"/></svg></b><b><svg><use href="#nodes"/></svg></b><b><svg><use href="#trash"/></svg></b><b><svg><use href="#cut"/></svg></b><b><svg><use href="#copy"/></svg></b><b><svg><use href="#paste"/></svg></b></div>
  <div class="bar"><i class="grip"></i><b><svg><use href="#tag"/><text x="6" y="12" class="tb">abc</text></svg></b><b><svg><use href="#pie"/></svg></b><b><svg><use href="#pinned"/><text x="4" y="12" class="tb">ab</text></svg></b><b><svg><use href="#gpin"/><text x="4.500" y="12" class="tb g">ab</text></svg></b><b><svg><use href="#geye"/><text x="4" y="11.500" class="tb g">abc</text></svg></b><b><svg><use href="#gmove"/><text x="4" y="11.500" class="tb g">abc</text></svg></b><b><svg><use href="#grot"/><text x="4" y="11.500" class="tb g">abc</text></svg></b><b><svg><use href="#gedit"/><text x="4" y="11.500" class="tb g">abc</text></svg></b></div>
  <div class="bar"><i class="grip"></i><b><svg><use href="#csw"/><text x="3.500" y="14" class="tc">CSW</text></svg></b></div>
  <div class="bar last"><i class="grip"></i><b><svg><use href="#python"/></svg></b></div>
</div>
<div class="toolrow">
  <div class="bar"><i class="grip"></i><b><svg><use href="#imp"/></svg></b><b><svg><use href="#exp"/></svg></b><s></s><b><svg><use href="#inspect"/></svg></b><b><svg><use href="#pedit"/></svg></b><b><svg><use href="#pcheck"/></svg></b><s></s><b><svg><use href="#pback"/></svg></b><b><svg><use href="#pwrench"/></svg></b></div>
  <div class="bar last"><i class="grip"></i><b><svg><use href="#usgs"/><text x="3.500" y="15" class="tu">USGS</text></svg></b><b><svg><use href="#usgs"/><text x="3.500" y="15" class="tu">USGS</text></svg></b></div>
</div>

<main class="work">
  <aside class="side">
    <div class="vbar first"><i class="hgrip"></i>
      <div><b><svg><use href="#vplus"/></svg></b></div><div><b><svg><use href="#raster"/></svg></b></div><div><b><svg><use href="#feather"/></svg></b></div><div><b><svg><use href="#pgis"/></svg></b><em></em></div><div><b><svg><use href="#spatial"/></svg></b><em></em></div><div><b><svg><use href="#wms"/></svg></b></div><div><b><svg><use href="#wfs"/></svg></b><em></em></div><div><b><svg><use href="#comma"/></svg></b></div><div><b><svg><use href="#vbox"/></svg></b></div><div><b><svg><use href="#vstar"/></svg></b><em></em></div><div class="mid"><b><svg><use href="#gpsstar"/></svg></b></div><div class="mid"><b><svg><use href="#virt"/></svg></b></div>
    </div>
    <div class="vbar"><i class="hgrip"></i>
      <div class="mid"><b><svg><use href="#cross"/></svg></b></div><div class="mid"><b><svg><use href="#compass"/></svg></b></div><div class="mid"><b><svg><use href="#gps"/></svg></b></div><div class="mid"><b><svg><use href="#topo"/></svg></b></div><div class="mid"><b><svg><use href="#geom"/></svg></b></div>
    </div>
  </aside>

  <section class="layers">
    <div class="dock-title"><span>Panel de capas</span><svg class="f"><use href="#float"/></svg><svg class="c"><use href="#x"/></svg></div>
    <div class="layer-tools"><svg><use href="#brush"/></svg><svg><use href="#grp"/></svg><svg><use href="#eye"/></svg><svg><use href="#funnel"/></svg><svg><use href="#ef"/></svg><em></em><svg><use href="#down"/></svg><svg><use href="#up"/></svg><svg><use href="#rem"/></svg></div>
    <ul class="layer-tree">
      <li><span class="cb"><svg viewBox="0 0 16 16"><path d="M3.500 8l3 3.500L12.500 4" /></svg></span><span class="sw green"></span><strong>recintos_municipales_inspire_peninbal_etrs89</strong></li>
      <li class="cur"><span class="cb"><svg viewBox="0 0 16 16"><path d="M3.500 8l3 3.500L12.500 4" /></svg></span><span class="sw violet"></span><strong>canarias_UTM</strong></li>
      <li><span class="cb"><svg viewBox="0 0 16 16"><path d="M3.500 8l3 3.500L12.500 4" /></svg></span><span class="sw mauve"></span><strong>recintos_municipales_inspire_canarias_wgs84</strong></li>
    </ul>
    <div class="tabs"><span class="tab active">Panel de capas</span><span class="tab">Panel del explorador</span></div>
  </section>

  <section class="canvas">
    <svg class="map" viewBox="432 154 747 846">
      <g transform="translate(430 500) scale(.33333)">
        <!-- La Palma -->
        <path class="isle" d="M167 84L176 90 200 94 228 92 234 106 238 120 252 136 246 148 236 156 238 170 240 186 236 206 226 222 216 234 208 250 200 264 186 258 184 222 172 208 162 184 152 172 146 152 134 136 126 124 138 108 150 94z"/>
        <path class="b" d="M192 94l2 34M192 128q-22-4-26 6l-32 2M136 120q20 14 54 8M196 126l38-24M200 132l40-10M198 120l20-26M168 136q8 6-2 30l-12 12M178 134q-8 20-4 36l8 14 2 34M194 128q10 6 4 24 8 20 2 36l2 32M202 142q18-6 38 0M200 154q6 12 20 12 16-4 18-14M204 164l2 24 32-8M204 202l20-10 16-12M218 190l14-20M186 216l14 4 16 14M156 178l14 28M162 168q10 10 14 36M202 220v8"/>
        <!-- El Hierro -->
        <path class="isle" d="M62 572L72 566 90 572 114 570 132 558 138 548 132 542 150 532 168 530 182 546 176 562 162 584 150 590 144 606 138 624 126 618 116 602 98 596 74 592 60 592z"/>
        <path class="b" d="M136 546l4 32-14 6-62 6M138 580l12 8M66 590l60-4 24 4"/>
        <!-- La Gomera -->
        <path class="isle" d="M424 384L436 372 454 366 472 374 488 376 510 390 526 400 530 418 514 432 490 450 464 456 440 444 424 430 418 408z"/>
        <path class="b" d="M420 400l18-2 8 10 20 8M422 424l44-10-34 26M466 414l-6-16 12-22M466 414l32-16 22-4M466 414l20 38M470 404l18-26M444 408l-14 12"/>
        <g transform="translate(540 150)">
          <!-- Tenerife -->
          <path class="isle" d="M66 157L92 150 106 142 120 148 150 148 178 140 206 140 230 132 250 128 264 116 278 106 290 92 294 84 300 76 324 68 332 60 356 64 400 60 406 50 414 56 422 66 416 78 390 92 370 98 352 116 338 128 322 136 314 150 316 172 304 194 292 216 286 236 284 250 266 266 250 286 236 300 212 300 190 308 170 314 160 310 158 294 150 280 136 266 122 244 106 220 104 206 102 194 92 184z"/>
          <path class="b" d="M106 142l-2 30-4 18M118 176l14-30 6 34M118 176l52 18M104 172l12 4M148 148l6 38M138 148l4 34M154 190l18 4M178 142l14 38M186 142l16 38M194 140l16 40M210 182l16 0 2-46M174 196l-2 24q10 8 32 0 24-14 32-34l34-34M178 188l30-6M104 210q30-20 68-16M174 220l-20 20-32 2M176 222q-8 22 4 42M186 226l22-4-8 38-18 4M182 264l-18 18M190 266l0 40M206 262l2 38M208 224l54 48M236 186l56 38M246 180l46 34M262 166l54 2M270 148l42 16M254 122l22 22 16-14M264 114l26 26M274 108l22 24M286 100l16 26M296 84l14 14-4 28M310 96q4-20 34-14 8 10-22 12zM330 62l-10 10-10 8M354 64v18M310 100l34 6 10-14-8-12M326 118q14-8 18 6-10 10-18-6zM290 132l24 4"/>
        </g>
        <g transform="translate(540 150)">
          <!-- Gran Canaria -->
          <path class="isle" d="M606 239L616 242 634 238 642 248 664 250 682 248 698 252 712 258 726 256 736 264 734 300 752 306 754 322 748 340 756 342 750 350 748 374 736 382 728 400 710 406 664 418 658 432 620 422 584 396 564 374 550 354 548 326 556 308 582 298 600 290 606 268z"/>
          <path class="isle" d="M724 238L738 236 740 256 730 254 724 248z"/>
          <path class="b" d="M606 264l24 24 18 16M634 240l6 40 10 24M610 298l40 6M584 300l6 40-10 24-14 8M590 322l30-2 24-14M590 338l26 2 6 14 18-12 18-10 20 2M620 354l2 66M650 304l10-36 10-20M650 304l16-24 24-30M650 304l8 16 20 14 38-8-2-16-24 0-16 16M656 278l14 12 20-18M650 300l34-10 16 6 14-20M684 300l30 8 26-2M680 338l72 0M680 342l4 26 24 20 22 12M688 346l16 28 44 0M680 338l30 10 38 4M660 260l2 30M690 248l-6 40M672 250l4 40M696 296l16-6 16 10M590 302l30-12M678 336l-2 20 8 10"/>
        </g>
      </g>
      <g transform="translate(960 430) scale(.33333)">
        <!-- Fuerteventura -->
        <path class="isle" d="M302 358L326 346 358 340 372 348 382 360 384 390 386 424 380 452 370 462 370 484 376 490 370 508 358 532 354 548 344 566 336 572 316 574 294 582 250 592 212 600 194 622 164 654 130 650 86 642 92 626 124 628 160 620 196 594 214 576 218 528 236 512 240 492 268 458 284 436 292 418 294 396 302 376z"/>
        <path class="b" d="M290 421q50-4 96 0M270 456l18 2 14 16 38 0 36 12M300 474l-14 8-4 26M240 493l20 6 22 8M282 508q40 10 62 54M282 508l-6 14-36 22 8 16 2 30"/>
        <!-- Lanzarote -->
        <path class="isle" d="M362 282L378 276 384 264 382 236 392 216 410 202 436 194 456 182 464 178 488 172 500 178 516 176 520 158 528 140 536 130 556 132 566 146 564 162 550 176 552 194 546 218 540 234 520 240 508 250 492 254 468 268 438 268 424 276 414 292 404 300 394 292 364 294z"/>
        <path class="b" d="M394 216l24 14 24 6 24-16 0-40M516 176l36 18M442 236l-2 32M460 230l24 28M466 220l26 6 0 28M492 230l14-2 8 12"/>
        <path class="isle" d="M516 54l4-6 10-2 7 6-5 8-10 2z M524 105l18 6-8 16-10 8-14-4 8-8 4-6z M382 341l5-4 6 4-2 6-7-1z"/>
        <path class="b" d="M512 98l8-2M513 102l4-2M536 128l8-2M600 110h5"/>
      </g>
    </svg>
  </section>

  <section class="toolbox">
    <div class="dock-title"><span>Caja de herramientas de procesado</span><svg class="f"><use href="#float"/></svg><svg class="c"><use href="#x"/></svg></div>
    <div class="search"><span>merge</span><svg viewBox="0 0 13 10"><path d="M0 5l4-5h9v10H4z" fill="#999"/><path d="M5.500 2.500l5 5M10.500 2.500l-5 5" stroke="#fff" stroke-width="1.200"/></svg>
      <div class="tooltip">Introducir nombre de algoritmo para filtrar la lista</div>
    </div>
    <ul class="tree">
      <li class="l0 h19"><svg class="tri"><use href="#tri"/></svg><span>Algoritmos usados recientemente</span></li>
      <li class="l1 h21"><svg class="ic"><use href="#alg"/></svg><span>Combinar</span></li>
      <li class="l1 h22"><svg class="ic"><use href="#saga"/></svg><span>Merge vector layers</span></li>
      <li class="l0 h22"><svg class="tri"><use href="#tri"/></svg><svg class="ic"><use href="#gdal"/><text x="-.5" y="17.500" class="tg">GDAL</text></svg><span>GDAL/OGR [48 geoalgoritmos]</span></li>
      <li class="l01 h19"><svg class="tri"><use href="#tri"/></svg><span>[GDAL] Miscelánea</span></li>
      <li class="l2 h21"><svg class="ic"><use href="#alg"/></svg><span>Combinar</span></li>
      <li class="l0 h22"><svg class="tri"><use href="#tri"/></svg><svg class="ic q"><use href="#logo"/></svg><span>Geoalgoritmos de QGIS [116 geoalgoritmos]</span></li>
      <li class="l01 h19"><svg class="tri"><use href="#tri"/></svg><span>Herramientas de geometría vectorial</span></li>
      <li class="l2 h20"><svg class="ic"><use href="#blob"/></svg><span>Merge lines</span></li>
      <li class="l01 h20"><svg class="tri"><use href="#tri"/></svg><span>Herramientas generales vectoriales</span></li>
      <li class="l2 h21"><svg class="ic"><use href="#docs"/></svg><span>Combinar capas vectoriales</span></li>
      <li class="l0 h21 sg"><svg class="tri"><use href="#tri"/></svg><svg class="ic"><use href="#saga"/></svg><span>SAGA (2.1.2) [235 geoalgoritmos]</span></li>
      <li class="l01 h19"><svg class="tri"><use href="#tri"/></svg><span>Vector general tools</span></li>
      <li class="l2 h22 cur"><svg class="ic"><use href="#saga"/></svg><span>Merge vector layers</span></li>
    </ul>
    <div class="note yellow">Hay proveedores deshabilitados que contienen algoritmos que incluyen su cadena de texto. Pulse <a>para verlos.</a></div>
    <div class="note blue">Puede añadir más algoritmos a la caja de herramientas, <a>habilitar proveedores adicionales.</a> <a class="gap">[cerrar]</a></div>
  </section>
</main>

<footer class="status">
  <label class="coord">Coordenada</label><div class="field coords">-18.248,28.289</div>
  <svg class="mouse" viewBox="0 0 20 22"><path d="M1 5Q2 0 7 0q5 1 6 8l5 8-4 6-8-4-4-7z" fill="#222"/><path d="M4 3l3 8M8 2l2 8M2 7l3 6" stroke="#fff" stroke-width="1.200"/><circle cx="12" cy="17" r="4" fill="#fff" stroke="#111" stroke-width="1.500"/><circle cx="12" cy="17" r="1.300"/><path d="M14 5l5-3M1 16h2" stroke="#555" stroke-dasharray="2 1.500"/></svg>
  <label class="esc">Escala</label><div class="field combo">1:2.426.995<svg viewBox="0 0 10 6"><path d="M.5 .5L5 5 9.500 .5" fill="none" stroke="#444" stroke-width="1.800"/></svg></div>
  <svg class="lock" viewBox="0 0 16 20"><path d="M3.500 10V6a4.500 4.500 0 0 1 9 0v4" fill="none" stroke="#aaa" stroke-width="2.500"/><rect x="0" y="9" width="16" height="11" rx="1" fill="#666"/></svg>
  <label class="amp">Amplificador</label><div class="field spin">100%<span class="arrows"><i></i><i class="dn"></i></span></div>
  <label class="rot">Rotación</label><div class="field spin">0,0<span class="arrows"><i></i><i class="dn"></i></span></div>
  <span class="cb"><svg viewBox="0 0 16 16"><path d="M3.500 8l3 3.500L12.500 4" /></svg></span><label class="rep">Representar</label>
  <svg class="crs" viewBox="0 0 20 20"><path d="M8 0h4v2q5 1 6 6h2v4h-2q-1 5-6 6v2H8v-2q-5-1-6-6H0V8h2q1-5 6-6z" fill="#2e2e2e"/><ellipse cx="10" cy="10" rx="6" ry="6" fill="#777" stroke="#ddd" stroke-width=".8"/><path d="M4 10h12M10 4v12M10 4q-6 6 0 12 6-6 0-12" fill="none" stroke="#e8e8e8" stroke-width=".9"/></svg>
  <label class="epsg">EPSG:4326 (al vuelo)</label>
  <svg class="bubble" viewBox="0 0 20 19"><path d="M10 0q10 0 10 8 0 5-4 7l2 4-6-4q-12 1-12-7 0-8 10-8z" fill="#666"/><g fill="#fff"><circle cx="5.500" cy="8" r="1.400"/><circle cx="10" cy="8" r="1.400"/><circle cx="14.500" cy="8" r="1.400"/></g></svg>
</footer>
</body>
</html>
```

FILE: styles.css
```css
* { box-sizing: border-box; }
body {
  margin: 0; width: 1920px; height: 1032px; overflow: hidden;
  display: flex; flex-direction: column;
  background: #f0f0f0; color: #000;
  font: 12.700px/16px "DejaVu Sans Condensed", "Noto Sans", sans-serif;
  white-space: nowrap;
}
.defs { position: absolute; }
svg { display: block; flex: none; overflow: visible; }
ul { list-style: none; margin: 0; padding: 0; }
i, em, b, s { font-style: normal; font-weight: normal; text-decoration: none; flex: none; }

/* icon lettering */
.t11 { font: bold 8.500px "Liberation Sans", sans-serif; fill: #8a8a8a; }
.ti { font: italic bold 15px "Liberation Serif", serif; fill: #fff; }
.ts { font: bold 15px "Liberation Serif", serif; fill: #555; }
.tq { font: 17px "Liberation Serif", serif; fill: #fff; }
.tb { font: bold 8px "DejaVu Sans Condensed", sans-serif; fill: #222; }
.tb.g { fill: #777; }
.tc { font: bold 8px "Noto Sans", sans-serif; fill: #555; }
.tu { font: bold 6.500px "Liberation Sans", sans-serif; fill: #ddd; }
.tg { font: bold 6px "DejaVu Sans Condensed", sans-serif; fill: #222; }

/* title bar */
.titlebar {
  display: grid; grid-template-columns: 150px 1fr 150px; height: 29px; flex: none;
  background: #cdaa8d; border-bottom: 1px solid #b48f73;
}
.app-logo { width: 16px; height: 20px; margin: 4px 0 0 4px; }
.titlebar h1 {
  margin: 0; text-align: center; color: #2b2420;
  font: 400 17.500px/31px "Open Sans", sans-serif;
}
.winbtns { display: flex; justify-content: flex-end; padding-right: 3px; }
.min { width: 14px; height: 2px; background: #252525; margin: 16px 20px 0 0; }
.restore { width: 15px; height: 15px; margin: 4px 9px 0 0; }
.close { width: 58px; height: 25px; background: #c75050; display: flex; align-items: center; justify-content: center; }
.close svg { width: 9px; height: 8px; }

.menu {
  display: grid; height: 22px; flex: none; padding: 0 0 0 8px;
  grid-template-columns: 65px 56px 35px 45px 94px 101px 65px 53px 96px 41px 67px auto;
  background: #f5f6f7; border-bottom: 1px solid #e8e8e8; line-height: 22px;
}
u { text-underline-offset: 2px; }

/* toolbars */
.toolrow { display: flex; height: 34px; flex: none; border-top: 1px solid #fff; border-bottom: 1px solid #b4b4b4; }
.bar { display: flex; align-items: center; border-right: 1px solid #b4b4b4; padding-right: 1px; box-shadow: 1px 0 0 #fff; }
.bar:not(:first-child) { border-left: 1px solid #fff; }
.bar.last { border-right: 0; box-shadow: none; }
.bar b, .vbar b { width: 31px; height: 30px; display: flex; align-items: center; padding-left: 3px; }
.bar b svg, .vbar b svg { width: 24px; height: 24px; }
.bar b.on { background: #b6d5f2; border: 1px solid #66a7e8; padding-left: 2px; }
.bar s { width: 1px; height: 24px; margin: 0 3px; background: #cfcfcf; }
.bar em, .side em, .layer-tools em { width: 15px; display: flex; justify-content: center; }
em::before { content: ""; border: 4.500px solid transparent; border-top: 5px solid #000; border-bottom: 0; }
em.gray::before { border-top-color: #777; }
.grip { width: 2px; height: 26px; margin: 0 6px 0 4px; background: repeating-linear-gradient(#b2b2b2 0 2px, transparent 2px 4px); }
.bar:not(:first-child) .grip { margin: 0 6px 0 3px; }

.work { display: flex; height: 848px; flex: none; }
.side { width: 50px; border-right: 1px solid #b4b4b4; }
.vbar { display: flex; flex-direction: column; padding: 3px 0 0 2px; }
.vbar.first { height: 374px; border-bottom: 1px solid #b4b4b4; box-shadow: 0 1px 0 #fff; }
.hgrip { width: 42px; height: 2px; margin: 0 0 7px 2px; background: repeating-linear-gradient(90deg, #b2b2b2 0 2px, transparent 2px 4px); }
.vbar div { display: flex; align-items: center; height: 30.100px; }
.vbar .mid { justify-content: center; padding-right: 4px; }

/* docks */
.dock-title {
  display: flex; align-items: center; height: 23px; flex: none;
  background: #dadada; border: 1px solid #b9b9b9; margin-top: 1px; padding: 1px 0 0 2px;
}
.dock-title span { flex: 1; }
.dock-title .f { width: 8px; height: 9px; margin-right: 9px; }
.dock-title .c { width: 8px; height: 8px; margin-right: 4px; }
.layers { width: 376px; display: flex; flex-direction: column; }
.layer-tools { display: flex; align-items: center; gap: 7px; height: 26px; margin-top: 2px; padding: 0 0 1px 5px; border-top: 1px solid #fff; }
.layer-tools svg { width: 16px; height: 16px; }
.layer-tools em { margin: 0 -4px; }
.layer-tree { flex: 1; background: #fff; border: 1px solid #828790; }
.layer-tree li { display: flex; align-items: center; height: 19px; margin-left: 20px; padding-left: 3px; }
.layer-tree .cur { background: #f5f5f5; box-shadow: inset 0 0 0 1px #dcdcdc; }
.layer-tree strong { font: bold 13px/16px "DejaVu Sans Condensed", sans-serif; }
.layer-tree .cur strong { text-decoration: underline; }
.cb { width: 16px; height: 16px; border: 1px solid #6a6a6a; background: #fff; display: flex; flex: none; }
.cb svg { width: 14px; height: 14px; }
.cb path { fill: none; stroke: #111; stroke-width: 2.600; }
.sw { width: 18px; height: 18px; margin: 0 6px; border: 1px solid; }
.green { background: #68a25a; border-color: #1e401e; }
.violet { background: #a58be3; border-color: #3d3d7a; }
.mauve { background: #b96cc4; border-color: #522058; }
.tabs { display: flex; height: 24px; flex: none; }
.tab { border: 1px solid #c4c4c4; border-top: 0; height: 22px; width: 144px; line-height: 23px; text-align: center; }
.tab.active { background: #fff; width: 117px; height: 24px; line-height: 25px; }

.canvas { width: 749px; margin-left: 5px; border: 1px solid #828790; background: #fff; }
.map { width: 747px; height: 846px; }
.isle { fill: #d57fd4; stroke: #000; stroke-width: 4.800; stroke-linejoin: round; }
.b { fill: none; stroke: #000; stroke-width: 4; stroke-linejoin: round; }

.toolbox { flex: 1; margin-left: 5px; display: flex; flex-direction: column; }
.toolbox .dock-title .c { margin-right: 3px; }
.search {
  position: relative; height: 22px; margin-top: 2px; flex: none; display: flex; align-items: center; justify-content: space-between;
  background: #fff; border: 1px solid #7eb4ea; padding: 0 4px 0 3px;
}
.search > svg { width: 13px; height: 10px; }
.tooltip {
  position: absolute; left: 81px; top: 33px; width: 346px; height: 24px; line-height: 20px; padding-left: 5px;
  background: #fff; border: 1px solid #767676; color: #575757; box-shadow: 2px 2px 1px #8d8d8d; z-index: 2;
}
.tree { flex: 1; background: #fff; border: 1px solid #828790; }
.tree li { display: flex; align-items: center; }
.tri { width: 8px; height: 8px; }
.ic { width: 19px; height: 19px; }
.l0 { padding-left: 7px; } .l0 .tri { margin-right: 8px; }
.l0 .ic { margin: 0 5px 0 0; }
.l0 .q { width: 14px; height: 17px; margin: 0 8px 0 2px; }
.l0.sg .ic { margin-right: 7px; }
.l01 { padding-left: 27px; } .l01 .tri { margin-right: 8px; }
.l1 { padding-left: 43px; } .l1 .ic { margin-right: 7px; }
.l2 { padding-left: 63px; } .l2 .ic { margin-right: 7px; }
.tree .cur { margin-left: 60px; padding-left: 3px; background: #f5f5f5; box-shadow: inset 0 0 0 1px #dcdcdc; }
.h19 { height: 19.600px; } .h20 { height: 20px; } .h21 { height: 20.800px; } .h22 { height: 22px; }
.note { flex: none; height: 27px; line-height: 26px; padding-left: 4px; border: 1px solid; letter-spacing: -.03px; }
.note a { color: #00f; text-decoration: underline; }
.note a.gap { margin-left: 8px; }
.yellow { background: #ffff80; border-color: #a5a552; margin-top: 1px; }
.blue { background: #55aaff; border-color: #3d79b5; color: #fff; margin-top: 1px; }

/* status bar */
.status { display: flex; align-items: center; height: 31px; padding: 1px 14px 0 787px; }
.field { height: 22px; background: #fff; border: 1px solid #abadb3; line-height: 21px; display: flex; flex: none; padding-left: 4px; letter-spacing: -.15px; }
.status label { flex: none; }
.coord { width: 72px; } .coords { width: 245px; justify-content: center; padding: 0; }
.mouse { width: 20px; height: 22px; margin: 0 12px 0 3px; }
.esc { width: 40px; } .combo { width: 99px; padding-left: 5px; }
.combo svg { width: 10px; height: 6px; margin: 7px 4px 0 auto; }
.lock { width: 16px; height: 20px; margin: 0 15px 0 5px; }
.amp { width: 75px; } .spin { width: 75px; }
.rot { width: 58px; margin-left: 9px; }
.arrows { margin: 1px 1px 1px auto; width: 15px; display: grid; }
.arrows i { border: 1px solid #bbb; background: #f0f0f0; display: flex; align-items: center; justify-content: center; }
.arrows i::before { content: ""; border: 3.500px solid transparent; border-bottom: 4px solid #000; border-top: 0; }
.arrows .dn::before { border-top: 4px solid #000; border-bottom: 0; }
.status .cb { margin: 0 6px; }
.rep { width: 86px; }
.crs { width: 20px; height: 20px; margin-right: 4px; }
.epsg { width: 142px; }
.bubble { width: 20px; height: 19px; }
```
